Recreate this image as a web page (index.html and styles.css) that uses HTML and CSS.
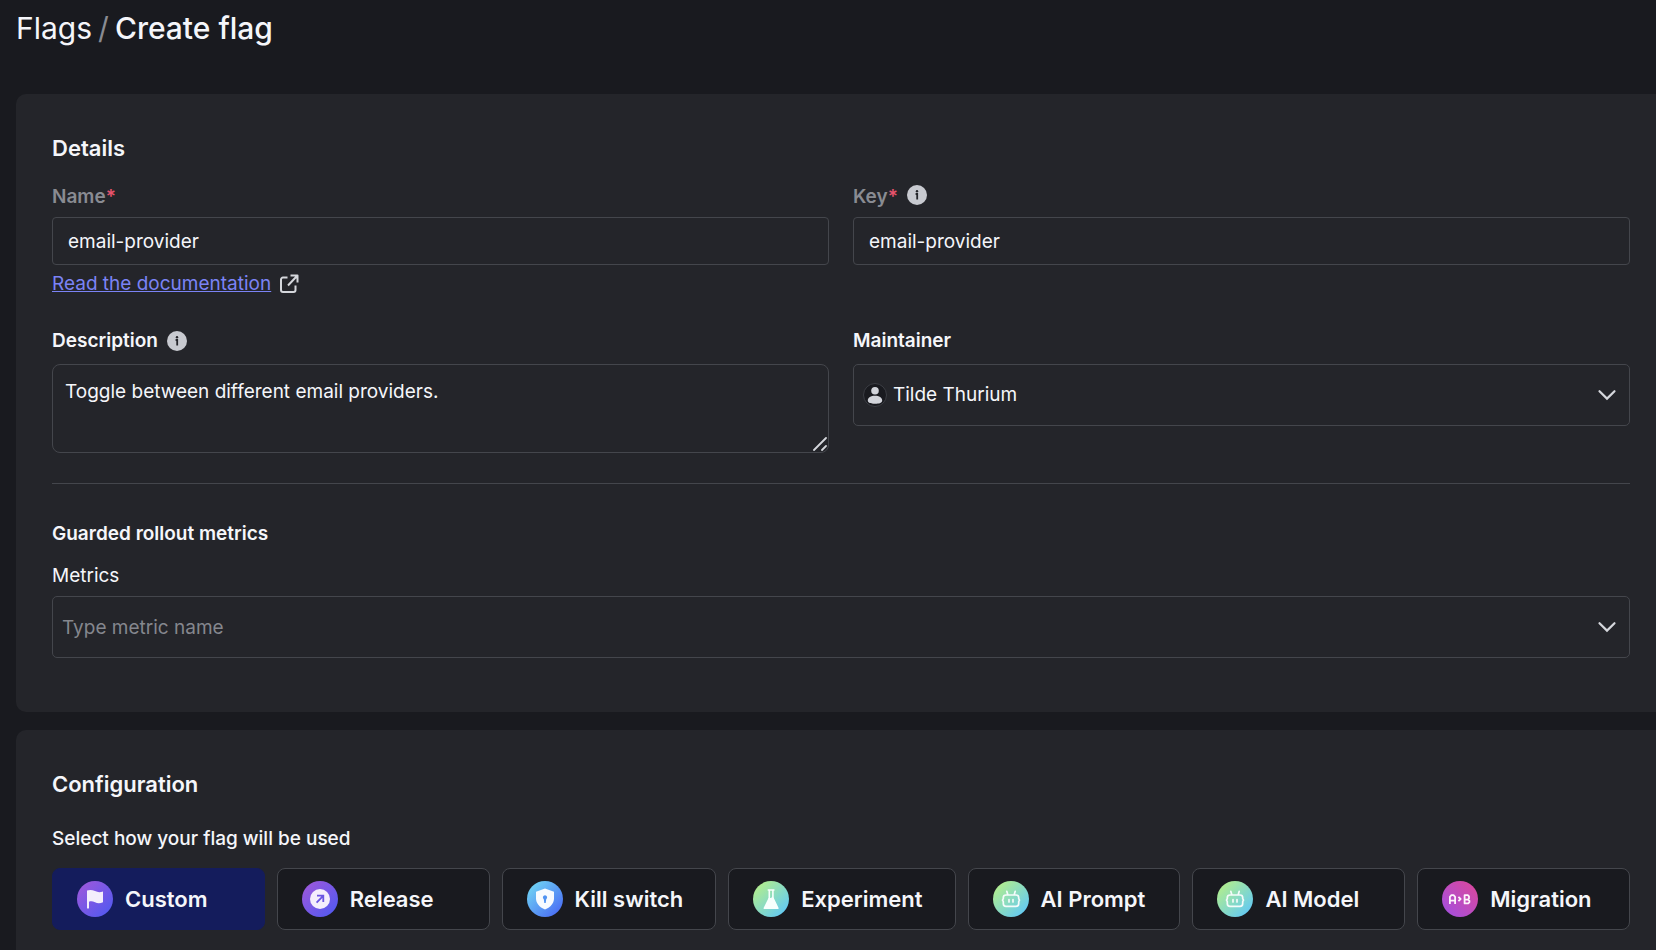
FILE: index.html
```html
<!DOCTYPE html>
<html lang="en">
<head>
<meta charset="utf-8">
<title>Create flag</title>
<link rel="stylesheet" href="styles.css">
</head>
<body>
<svg class="defs" width="0" height="0" aria-hidden="true">
  <defs>
    <linearGradient id="purple" x1="0" y1="0" x2="1" y2="1"><stop offset="0.1" stop-color="#9a58dc"/><stop offset="0.9" stop-color="#5459f0"/></linearGradient>
    <linearGradient id="blue" x1="0" y1="0" x2="1" y2="1"><stop offset="0.1" stop-color="#6fd3f3"/><stop offset="0.9" stop-color="#4a6df5"/></linearGradient>
    <linearGradient id="green" x1="0" y1="0" x2="1" y2="1"><stop offset="0.1" stop-color="#b3ee8c"/><stop offset="0.9" stop-color="#62c9f5"/></linearGradient>
    <linearGradient id="pink" x1="1" y1="0" x2="0" y2="1"><stop offset="0.1" stop-color="#d8489f"/><stop offset="0.9" stop-color="#a64fdc"/></linearGradient>
    <symbol id="info" viewBox="0 0 20 20"><circle cx="10" cy="10" r="10" fill="#c8cad0"/><circle cx="10" cy="6.2" r="1.2" fill="#24252a"/><path d="M8.6 9h1.6v5.4" fill="none" stroke="#24252a" stroke-width="1.8"/></symbol>
    <symbol id="chevron" viewBox="0 0 20 12"><path d="M2.5 2.2 10 9.6l7.500-7.400" fill="none" stroke="#d5d7dc" stroke-width="2.200" stroke-linecap="round"/></symbol>
    <symbol id="robot" viewBox="0 0 36 36"><circle cx="18" cy="18" r="18" fill="url(#green)"/><g fill="none" stroke="#f4fbfa" stroke-width="1.700" stroke-linecap="round" stroke-linejoin="round"><path d="M13 14h10c1.800 0 2.700 1.200 2.700 2.600v1l.8 1.500-.8 1.500v1.800c0 1.800-.9 2.900-2.700 2.900H13c-1.800 0-2.700-1.100-2.700-2.900v-1.800l-.8-1.500.8-1.500v-1c0-1.400.9-2.600 2.700-2.600zM14.800 13.800l-1-3.500M21.200 13.800l1-3.500M16 18.500v2.400M20 18.500v2.400"/></g></symbol>
  </defs>
</svg>

<nav class="breadcrumb" aria-label="Breadcrumb">
  <a href="#flags">Flags</a>
  <span class="slash">/</span>
  <h1>Create flag</h1>
</nav>

<main class="cards">
  <section class="card">
    <h2>Details</h2>
    <div class="fields">
      <div class="field">
        <div class="label-row"><label class="required" for="name">Name<span class="star">*</span></label></div>
        <input class="text" id="name" type="text" value="email-provider">
        <a class="doc-link" href="#docs"><span>Read the documentation</span>
          <svg width="20" height="20" viewBox="0 0 20 20" fill="none" stroke="#d5d7dc" stroke-width="2" stroke-linejoin="round"><path d="M8.500 3.500H4a2 2 0 0 0-2 2V16a2 2 0 0 0 2 2h10.500a2 2 0 0 0 2-2v-4.500M11.500 1.500h7v7M18 2l-9 9.500"/></svg>
        </a>
      </div>
      <div class="field">
        <div class="label-row"><label class="required" for="key">Key<span class="star">*</span></label><svg class="info" width="20" height="20"><use href="#info"/></svg></div>
        <input class="text" id="key" type="text" value="email-provider">
      </div>
    </div>
    <div class="fields second">
      <div class="field">
        <div class="label-row"><label for="description">Description</label><svg class="info" width="20" height="20"><use href="#info"/></svg></div>
        <div class="area">
          <textarea id="description">Toggle between different email providers.</textarea>
          <svg class="grip" width="14" height="14" viewBox="0 0 14 14" stroke="#d5d7dc" stroke-width="1.800" stroke-linecap="round"><path d="M1 13 13 1M9 13l4-4"/></svg>
        </div>
      </div>
      <div class="field">
        <div class="label-row"><label for="maintainer">Maintainer</label></div>
        <div class="picker">
          <svg width="24" height="24" viewBox="0 0 24 24"><circle cx="12" cy="12" r="11.500" fill="#191a1f" stroke="#3c3e44"/><circle cx="12" cy="7.800" r="3.800" fill="#d2d4da"/><path d="M4.800 17.500c0-3 3-4.700 7.200-4.700s7.200 1.700 7.200 4.700c0 2.400-2.800 3.300-7.200 3.300s-7.200-.9-7.200-3.300z" fill="#d2d4da"/></svg>
          <select id="maintainer"><option>Tilde Thurium</option></select>
          <svg class="chevron" width="20" height="12"><use href="#chevron"/></svg>
        </div>
      </div>
    </div>
    <hr>
    <h3>Guarded rollout metrics</h3>
    <label class="plain" for="metrics">Metrics</label>
    <div class="picker">
      <input id="metrics" type="text" role="combobox" aria-expanded="false" placeholder="Type metric name">
      <svg class="chevron" width="20" height="12"><use href="#chevron"/></svg>
    </div>
  </section>

  <section class="card config">
    <h2>Configuration</h2>
    <p id="usage">Select how your flag will be used</p>
    <div class="types" role="group" aria-labelledby="usage">
      <button class="type selected" type="button" aria-pressed="true">
        <svg width="36" height="36" viewBox="0 0 36 36"><circle cx="18" cy="18" r="18" fill="url(#purple)"/><path d="M10 9.500c3-1 5.500-.6 8 .6 2.800 1.300 5 1.300 8 .4v10.800c-3 1.200-5.400 1.200-8 0-2.200-1-4-1.200-6-.6v6.500c0 .5-2 .5-2 0z" fill="#f4eefc"/></svg>Custom
      </button>
      <button class="type" type="button" aria-pressed="false">
        <svg width="36" height="36" viewBox="0 0 36 36"><circle cx="18" cy="18" r="18" fill="url(#purple)"/><circle cx="18" cy="18" r="10" fill="#f4eefc"/><path d="m14.600 21.600 6.600-6.800M15 14.700h6.300V21" fill="none" stroke="#6a55e2" stroke-width="1.800"/></svg>Release
      </button>
      <button class="type" type="button" aria-pressed="false">
        <svg width="36" height="36" viewBox="0 0 36 36"><circle cx="18" cy="18" r="18" fill="url(#blue)"/><path d="m18 7.500 9 3.200v6.500c0 5-3.200 8.800-9 11.300-5.800-2.500-9-6.300-9-11.300v-6.500z" fill="#f7fbff"/><path d="M18 14.200a2.200 2.200 0 0 1 1.200 4l-.5 3.800h-1.400l-.5-3.800a2.200 2.200 0 0 1 1.200-4z" fill="#4f93f2"/></svg>Kill switch
      </button>
      <button class="type" type="button" aria-pressed="false">
        <svg width="36" height="36" viewBox="0 0 36 36"><circle cx="18" cy="18" r="18" fill="url(#green)"/><path d="M15.300 9h5.600M16.300 9v8.500M19.900 9v8.500" stroke="#f7fffd" stroke-width="1.600" stroke-linecap="round"/><path d="M15.500 17h2.700l1-1.500 1.600 1.500 4.700 9.800c.3.800 0 1.200-.8 1.200H11.500c-.8 0-1.100-.4-.8-1.200z" fill="#f7fffd"/></svg>Experiment
      </button>
      <button class="type" type="button" aria-pressed="false">
        <svg width="36" height="36"><use href="#robot"/></svg>AI Prompt
      </button>
      <button class="type" type="button" aria-pressed="false">
        <svg width="36" height="36"><use href="#robot"/></svg>AI Model
      </button>
      <button class="type" type="button" aria-pressed="false">
        <svg width="36" height="36" viewBox="0 0 36 36"><circle cx="18" cy="18" r="18" fill="url(#pink)"/><g fill="none" stroke="#fdf3fb" stroke-width="1.800" stroke-linejoin="round"><path d="M7.900 23v-7.200l1.500-1.600h2.200l1.500 1.600V23M7.900 19.600h5.200M16.400 15.800l2.200 2.200-2.200 2.200M22.600 14.200h3.200l1.200 1.200v2l-1.200 1.200 1.600 1.200v1.400l-1.200 1.200h-3.600zM22.600 18.600h3.200"/></g></svg>Migration
      </button>
    </div>
  </section>
</main>
</body>
</html>
```
FILE: styles.css
```css
* {
  box-sizing: border-box;
}

body {
  margin: 0;
  min-height: 100vh;
  display: flex;
  flex-direction: column;
  background: #191a1f;
  color: #f5f6fa;
  font-family: Inter, "Liberation Sans", sans-serif;
  font-size: 19px;
  line-height: 24px;
}

h1, h2, h3, p {
  margin: 0;
}

svg {
  display: block;
  flex: none;
}

.defs {
  position: absolute;
}

input, textarea, select, button {
  font: inherit;
  color: inherit;
}

.breadcrumb {
  display: flex;
  gap: 6px;
  padding: 9px 16px 47px;
  font-size: 30px;
  line-height: 38px;
}

.breadcrumb a {
  color: inherit;
  text-decoration: none;
}

.breadcrumb h1 {
  font-size: 30px;
  font-weight: 500;
}

.slash {
  color: #898b92;
}

.cards {
  flex: 1;
  display: flex;
  flex-direction: column;
  gap: 18px;
  padding-left: 16px;
}

.card {
  padding: 40px 26px 54px 36px;
  background: #24252a;
  border-radius: 10px 0 0 10px;
}

.card h2 {
  font-size: 22px;
  line-height: 28px;
  font-weight: 600;
}

.fields {
  display: grid;
  grid-template-columns: 1fr 1fr;
  gap: 24px;
  padding-top: 23px;
}

.fields.second {
  padding-top: 33px;
}

.label-row {
  display: flex;
  gap: 9px;
  padding-bottom: 8px;
  font-weight: 600;
}

.second .label-row {
  align-items: center;
  padding-bottom: 11px;
}

.required {
  color: #898b92;
}

.star {
  color: #e8536c;
}

.text {
  display: block;
  width: 100%;
  height: 48px;
  padding: 0 15px;
  background: transparent;
  border: 1px solid #44464c;
  border-radius: 4px;
}

.doc-link {
  display: flex;
  align-items: center;
  gap: 8px;
  padding-top: 7px;
  color: #7b83f5;
}

.area {
  position: relative;
}

textarea {
  display: block;
  width: 100%;
  height: 89px;
  padding: 15px 12px;
  background: transparent;
  border: 1px solid #44464c;
  border-radius: 8px;
  resize: none;
}

.grip {
  position: absolute;
  right: 2px;
  bottom: 2px;
}

.picker {
  display: flex;
  align-items: center;
  gap: 6px;
  height: 62px;
  padding: 0 12px 0 9px;
  border: 1px solid #44464c;
  border-radius: 5px;
}

.picker select,
.picker input {
  flex: 1;
  min-width: 0;
  height: 48px;
  padding: 0;
  appearance: none;
  background: transparent;
  border: 0;
}

.picker input::placeholder {
  color: #85878e;
  opacity: 1;
}

.chevron {
  pointer-events: none;
}

hr {
  height: 1px;
  margin: 30px 0 38px;
  background: #44464c;
  border: 0;
}

.card h3 {
  font-size: 19px;
  line-height: 24px;
  font-weight: 600;
}

.plain {
  display: block;
  padding: 18px 0 8px;
}

.config {
  flex: 1;
  padding-bottom: 20px;
  border-bottom-left-radius: 0;
}

.config p {
  padding: 29px 0 17px;
  font-weight: 500;
}

.types {
  display: flex;
  gap: 12px;
}

.type {
  flex: 1 1 0;
  display: flex;
  align-items: center;
  gap: 12px;
  height: 62px;
  padding: 0 32px 0 24px;
  background: #191a1f;
  border: 1px solid #44464c;
  border-radius: 8px;
  font-size: 22px;
  font-weight: 600;
  white-space: nowrap;
}

.type.selected {
  background: #141c5c;
  border-color: #141c5c;
}
```
